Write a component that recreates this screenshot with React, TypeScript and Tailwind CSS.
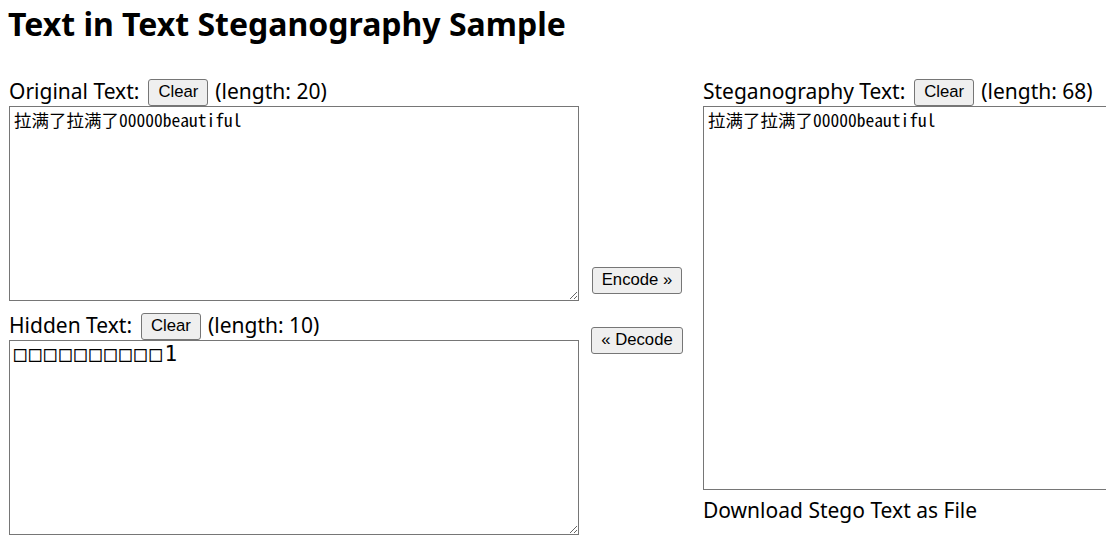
import { useState } from 'react';

const labelFont = { fontFamily: '"Noto Sans", "DejaVu Sans", sans-serif' };

function ClearButton({ onClick }: { onClick: () => void }) {
  return (
    <button
      onClick={onClick}
      className="h-[27px] px-[9px] ml-[9px] mr-[7px] border border-[#767676] rounded-[3px] bg-[#efefef] text-[16.7px] text-black leading-none font-['Liberation_Sans',Arial,sans-serif]"
    >
      Clear
    </button>
  );
}

function Box({
  label,
  length,
  value,
  setValue,
  className,
}: {
  label: string;
  length: number;
  value: string;
  setValue: (v: string) => void;
  className: string;
}) {
  return (
    <div className="flex flex-col">
      <div className="flex items-center h-[28px] text-[21px] text-black whitespace-nowrap" style={labelFont}>
        <span>{label}</span>
        <ClearButton onClick={() => setValue('')} />
        <span>(length: {value.length === 0 ? 0 : length})</span>
      </div>
      <textarea
        value={value}
        onChange={(e) => setValue(e.target.value)}
        className={`${className} shrink-0 border border-[#767676] px-[4px] py-[2px] leading-[22px] text-black outline-none`}
      />
    </div>
  );
}

export default function App() {
  const [original, setOriginal] = useState('拉满了拉满了00000beautiful');
  const [hidden, setHidden] = useState('□□□□□□□□□□1');
  const [stego, setStego] = useState('拉满了拉满了00000beautiful');

  return (
    <main className="w-[1106px] h-[546px] overflow-hidden bg-white pl-[8px]">
      <h1 className="pt-[4px] text-[32px] leading-[40px] font-bold text-black" style={labelFont}>
        Text in Text Steganography Sample
      </h1>
      <div className="flex mt-[34px] pl-[1px]">
        <div className="flex flex-col shrink-0 gap-[11px] w-[570px]">
          <Box
            label="Original Text:"
            length={20}
            value={original}
            setValue={setOriginal}
            className="w-[570px] h-[195px] text-[17.5px] font-['Noto_Sans_Mono_CJK_JP','Noto_Sans_CJK_JP',monospace]"
          />
          <Box
            label="Hidden Text:"
            length={10}
            value={hidden}
            setValue={setHidden}
            className="w-[570px] h-[195px] text-[21px] tracking-[2.4px] pl-[4px] font-['DejaVu_Sans_Mono',monospace]"
          />
        </div>
        <div className="flex flex-col shrink-0 items-center w-[116px] pt-[189px] text-[16.7px] font-['Liberation_Sans',Arial,sans-serif]">
          <button className="h-[27px] px-[9px] border border-[#767676] rounded-[3px] bg-[#efefef] text-black leading-none">
            Encode »
          </button>
          <button className="mt-[33px] h-[27px] px-[9px] border border-[#767676] rounded-[3px] bg-[#efefef] text-black leading-none">
            « Decode
          </button>
        </div>
        <div className="flex flex-col shrink-0 pl-[8px]">
          <Box
            label="Steganography Text:"
            length={68}
            value={stego}
            setValue={setStego}
            className="w-[420px] h-[384px] text-[17.5px] font-['Noto_Sans_Mono_CJK_JP','Noto_Sans_CJK_JP',monospace]"
          />
          <div className="mt-[5px] text-[21px] text-black" style={labelFont}>
            Download Stego Text as File
          </div>
        </div>
      </div>
    </main>
  );
}
